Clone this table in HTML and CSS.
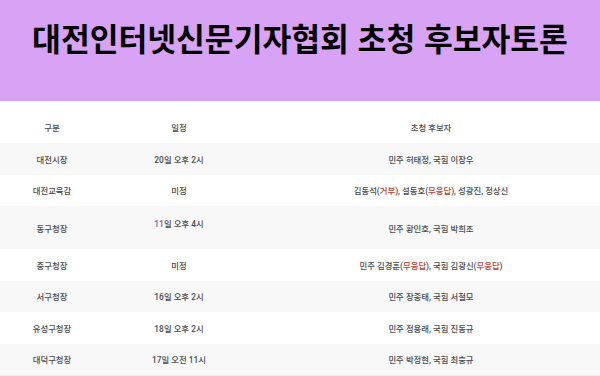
FILE: index.html
```html
<!DOCTYPE html>
<html lang="ko">
<head>
<meta charset="utf-8">
<title>대전인터넷신문기자협회 초청 후보자토론</title>
<link rel="stylesheet" href="styles.css">
</head>
<body>
<header class="banner">
  <h1 class="banner-title">대전인터넷신문기자협회 초청 후보자토론</h1>
</header>
<table class="sched">
  <colgroup>
    <col class="c-kind">
    <col class="c-date">
    <col class="c-cand">
  </colgroup>
  <thead>
    <tr class="head-row"><th>구분</th><th>일정</th><th class="cand">초청 후보자</th></tr>
  </thead>
  <tbody>
    <tr class="alt"><td>대전시장</td><td>20일 오후 2시</td><td class="cand">민주 허태정, 국힘 이장우</td></tr>
    <tr><td>대전교육감</td><td>미정</td><td class="cand">김동석(<span class="red">거부</span>), 설동호(<span class="red">무응답</span>), 성광진, 정상신</td></tr>
    <tr class="alt tall"><td>동구청장</td><td><span class="raised"><span class="num">11</span>일 오후 4시</span></td><td class="cand">민주 황인호, 국힘 박희조</td></tr>
    <tr><td>중구청장</td><td>미정</td><td class="cand">민주 김경훈(<span class="red">무응답</span>), 국힘 김광신(<span class="red">무응답</span>)</td></tr>
    <tr class="alt"><td>서구청장</td><td>16일 오후 2시</td><td class="cand">민주 장종태, 국힘 서철모</td></tr>
    <tr><td>유성구청장</td><td>18일 오후 2시</td><td class="cand">민주 정용래, 국힘 진동규</td></tr>
    <tr class="alt last"><td>대덕구청장</td><td>17일 오전 11시</td><td class="cand">민주 박정현, 국힘 최충규</td></tr>
  </tbody>
</table>
</body>
</html>
```
FILE: styles.css
```css
html, body {
  margin: 0;
  padding: 0;
  background: #ffffff;
}
body {
  font-family: Roboto, "Noto Sans CJK KR", sans-serif;
}
.banner {
  height: 101px;
  background: #d8a2f5;
  box-sizing: border-box;
  padding-top: 18px;
}
.banner-title {
  margin: 0;
  text-align: center;
  font-family: "Noto Sans CJK KR", sans-serif;
  font-weight: 700;
  font-size: 31.3px;
  line-height: 40px;
  color: #000;
  letter-spacing: 0;
}
.sched {
  width: 100%;
  margin-top: 9px;
  border-collapse: collapse;
  table-layout: fixed;
  font-size: 8.4px;
  color: #4a4a4a;
}
.c-kind { width: 104px; }
.c-date { width: 150px; }
.sched th, .sched td {
  padding: 0;
  text-align: center;
  vertical-align: middle;
  font-weight: 500;
  white-space: nowrap;
}
.sched .cand { padding-left: 8px; }
.head-row { height: 33px; }
.sched tbody tr { height: 31.5px; }
.sched tbody tr.tall { height: 43px; }
.alt { background: #f8f8f8; }
.last { border-bottom: 1px solid #ececec; }
.red { color: #c0392b; }
.num { color: #7a5aa6; }
.raised {
  display: inline-block;
  padding-bottom: 9px;
}
```
